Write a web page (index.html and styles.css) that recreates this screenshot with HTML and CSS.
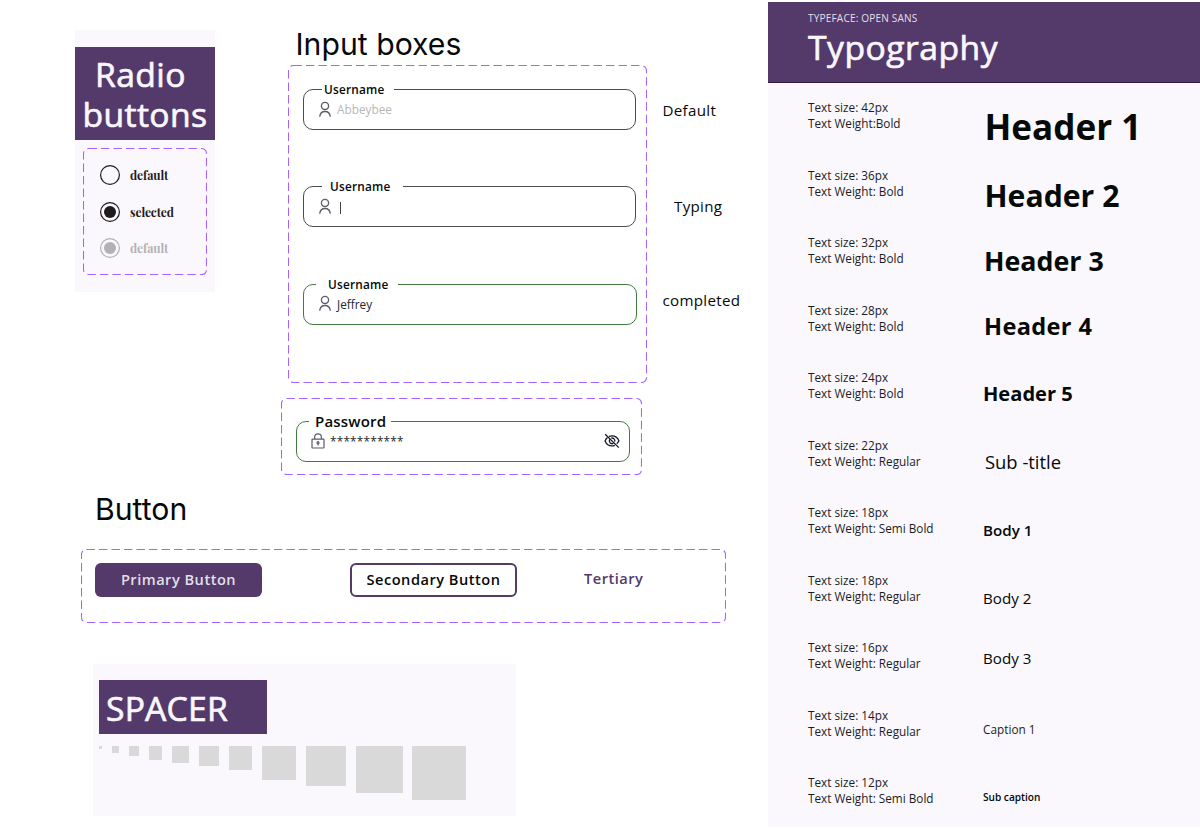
FILE: index.html
```html
<!DOCTYPE html>
<html lang="en">
<head>
  <meta charset="UTF-8">
  <title>Style guide</title>
  <meta name="viewport" content="width=device-width, initial-scale=1">
  <link rel="stylesheet" href="styles.css">
</head>
<body>

<!-- Shared icons -->
<svg class="sprite" width="0" height="0">
  <symbol id="icon-user" viewBox="0 0 12 17">
    <circle cx="6" cy="4.9" r="3.6"/>
    <path d="M.7 15.8C1 12.600 3.100 10.500 6 10.500s5 2.100 5.300 5.300"/>
  </symbol>
</svg>

<div class="board">
  <main class="components">
    <div class="top">
      <section class="radio-card">
        <h2 class="banner radio-title">Radio&nbsp;<br>buttons</h2>
        <div class="frame radio-frame">
          <svg class="dashes"><rect x="0.5" y="0.5" rx="5"/></svg>
          <div class="radio">
            <svg width="20" height="20"><circle class="ring" cx="10" cy="10" r="9.400"/></svg>
            <span>default</span>
          </div>
          <div class="radio">
            <svg width="20" height="20"><circle class="ring" cx="10" cy="10" r="9.400"/><circle class="dot" cx="10" cy="10" r="6"/></svg>
            <span>selected</span>
          </div>
          <div class="radio disabled">
            <svg width="20" height="20"><circle class="ring" cx="10" cy="10" r="9.400"/><circle class="dot" cx="10" cy="10" r="6"/></svg>
            <span>default</span>
          </div>
        </div>
      </section>

      <section class="inputs">
        <h2 class="heading">Input boxes</h2>
        <div class="inputs-row">
          <div class="frame inputs-frame">
            <svg class="dashes"><rect x="0.5" y="0.5" rx="5"/></svg>
            <fieldset class="field">
              <legend>Username</legend>
              <div class="value placeholder"><svg class="user"><use href="#icon-user"/></svg><span>Abbeybee</span></div>
            </fieldset>
            <fieldset class="field typing">
              <legend>Username</legend>
              <div class="value"><svg class="user"><use href="#icon-user"/></svg><i class="caret"></i></div>
            </fieldset>
            <fieldset class="field completed">
              <legend>Username</legend>
              <div class="value"><svg class="user"><use href="#icon-user"/></svg><span>Jeffrey</span></div>
            </fieldset>
          </div>
          <div class="states">
            <span>Default</span>
            <span class="state-typing">Typing</span>
            <span>completed</span>
          </div>
        </div>

        <div class="frame password-frame">
          <svg class="dashes"><rect x="0.5" y="0.5" rx="5"/></svg>
          <fieldset class="field password">
            <legend>Password</legend>
            <div class="value">
              <svg class="lock" viewBox="0 0 14 16">
                <rect x="1" y="6.200" width="12" height="8.800" rx=".5"/>
                <path d="M3.600 6V4.300a3.400 3.400 0 0 1 6.800 0V6M7 10v2.500"/>
                <circle cx="7" cy="9.700" r="1"/>
              </svg>
              <span class="stars">***********</span>
              <svg class="eye" viewBox="0 0 16 16">
                <path d="M5 3.300A7.500 6 0 0 1 8 2.800c3.200 0 5.700 2 6.900 5-.5 1.200-1.200 2.200-2.100 3M10.800 12.300a7.500 6 0 0 1-2.800.6c-3.200 0-5.700-2-6.900-5 .5-1.300 1.300-2.400 2.400-3.300"/>
                <path d="M7.300 5.100a2.800 2.800 0 0 1 3.400 3.500M5.600 6.600a2.800 2.800 0 0 0 3.700 3.800M1.200 1.200l13.600 13.400"/>
              </svg>
            </div>
          </fieldset>
        </div>
      </section>
    </div>

    <section class="buttons">
      <h2 class="heading">Button</h2>
      <div class="frame buttons-frame">
        <svg class="dashes"><rect x="0.5" y="0.5" rx="5"/></svg>
        <button class="btn primary">Primary Button</button>
        <button class="btn secondary">Secondary Button</button>
        <button class="btn tertiary">Tertiary</button>
      </div>
    </section>

    <section class="spacer-card">
      <h2 class="banner spacer-title">SPACER</h2>
      <div class="squares">
        <i style="width:3.4px"></i>
        <i style="width:6.7px"></i>
        <i style="width:10.1px"></i>
        <i style="width:13.5px"></i>
        <i style="width:16.8px"></i>
        <i style="width:20.2px"></i>
        <i style="width:23.6px"></i>
        <i style="width:33.6px"></i>
        <i style="width:40.2px"></i>
        <i style="width:47px"></i>
        <i style="width:53.7px"></i>
      </div>
    </section>
  </main>

  <aside class="typography">
    <header class="type-header">
      <p>TYPEFACE: OPEN SANS</p>
      <h1>Typography</h1>
    </header>
    <div class="type-list">
      <div class="type-row"><p>Text size: 42px<br>Text Weight:Bold</p><span class="h1">Header 1</span></div>
      <div class="type-row"><p>Text size: 36px<br>Text Weight: Bold</p><span class="h2">Header 2</span></div>
      <div class="type-row"><p>Text size: 32px<br>Text Weight: Bold</p><span class="h3">Header 3</span></div>
      <div class="type-row"><p>Text size: 28px<br>Text Weight: Bold</p><span class="h4">Header 4</span></div>
      <div class="type-row"><p>Text size: 24px<br>Text Weight: Bold</p><span class="h5">Header 5</span></div>
      <div class="type-row"><p>Text size: 22px<br>Text Weight: Regular</p><span class="subtitle">Sub -title</span></div>
      <div class="type-row"><p>Text size: 18px<br>Text Weight: Semi Bold</p><span class="body1">Body 1</span></div>
      <div class="type-row"><p>Text size: 18px<br>Text Weight: Regular</p><span class="body2">Body 2</span></div>
      <div class="type-row"><p>Text size: 16px<br>Text Weight: Regular</p><span class="body3">Body 3</span></div>
      <div class="type-row"><p>Text size: 14px<br>Text Weight: Regular</p><span class="caption">Caption 1</span></div>
      <div class="type-row"><p>Text size: 12px<br>Text Weight: Semi Bold</p><span class="subcaption">Sub caption</span></div>
    </div>
  </aside>
</div>

</body>
</html>
```

FILE: styles.css
```css
* {
  box-sizing: border-box;
}
body {
  margin: 0;
  background: #fff;
  color: #050908;
  font-family: 'Open Sans', sans-serif;
}
h1, h2, p {
  margin: 0;
}
.sprite {
  display: none;
}
.board {
  display: grid;
  grid-template-columns: 768px 432px;
  height: 828px;
  overflow: hidden;
}
.top {
  display: flex;
  align-items: flex-start;
  height: 475px;
}
.heading {
  font: 400 30.2px/40px Inter, sans-serif;
  height: 40px;
}
.banner, .type-header h1 {
  color: #f9f7fc;
  font-size: 33.67px;
  font-weight: 400;
  letter-spacing: 0.4px;
  -webkit-text-stroke: 0.7px #f9f7fc;
}
.banner {
  background: #533a6b;
  line-height: 40px;
}

/* Dashed frames */
.frame {
  position: relative;
}
.dashes {
  position: absolute;
  inset: 0;
  width: 100%;
  height: 100%;
  pointer-events: none;
}
.dashes rect {
  width: calc(100% - 1px);
  height: calc(100% - 1px);
  fill: none;
  stroke: #a563ff;
  stroke-width: 1.1;
  stroke-dasharray: 8.4 4.1;
}

/* Radio buttons */
.radio-card {
  width: 140px;
  height: 262px;
  margin: 30px 0 0 75px;
  padding-top: 17px;
  background: #faf8fc;
}
.radio-title {
  height: 93px;
  padding: 7px 0 0;
  text-align: center;
}
.radio-frame {
  width: 124px;
  height: 127px;
  margin: 8px 0 0 8px;
  padding: 17px 0 0 17px;
}
.radio {
  display: flex;
  align-items: center;
  gap: 10px;
  height: 20px;
  margin-bottom: 16.7px;
  color: #1f1b1c;
  font: 700 12px/20px 'Playfair Display', 'Liberation Serif', serif;
  letter-spacing: -0.1px;
}
.radio .ring {
  fill: none;
  stroke: currentColor;
  stroke-width: 1.2;
}
.radio .dot {
  fill: currentColor;
}
.radio.disabled {
  color: #b3b1b3;
}

/* Inputs */
.inputs {
  margin: 24px 0 0 66px;
}
.inputs .heading {
  padding-left: 14.5px;
}
.inputs-row {
  display: flex;
  margin: 1px 0 0 7px;
}
.inputs-frame {
  display: flex;
  flex-direction: column;
  gap: 49.4px;
  width: 359px;
  height: 318px;
  padding: 17px 0 0 15px;
}
.field {
  width: 332.5px;
  height: 48px;
  margin: 0;
  padding: 0;
  border: 1px solid #4c4c4e;
  border-radius: 10px;
}
.field legend {
  width: 72px;
  margin-left: 18px;
  padding: 0 0 0 2px;
  font-size: 11.8px;
  font-weight: 600;
  line-height: 15px;
  letter-spacing: 0.2px;
}
.field.typing legend {
  width: 81px;
  padding-left: 8px;
}
.field.completed {
  width: 334px;
  border-color: #437a40;
}
.field.completed legend {
  width: 82px;
  margin-left: 12px;
  padding-left: 12px;
}
.value {
  display: flex;
  align-items: center;
  height: 24px;
  padding-left: 15px;
  color: #23272a;
  font-size: 11.8px;
}
.placeholder {
  color: #b7b7b7;
}
.user {
  width: 12px;
  height: 17px;
  margin-right: 6px;
  fill: none;
  stroke: #5a5d6b;
  stroke-width: 1.3;
}
.caret {
  width: 1px;
  height: 12px;
  margin: 3px 0 0 3px;
  background: #444;
}
.states {
  display: flex;
  flex-direction: column;
  gap: 74px;
  padding: 35px 0 0 15.5px;
  font-size: 15.15px;
  line-height: 20px;
  letter-spacing: 0.3px;
}
.state-typing {
  margin: 1.5px 0 0 11.5px;
}
.password-frame {
  width: 361px;
  height: 77px;
  margin-top: 15px;
  padding: 14.4px 0 0 15px;
}
.field.password {
  width: 334px;
  height: 49.5px;
  border-color: #437a40;
}
.field.password legend {
  width: 82px;
  margin-left: 12px;
  padding-left: 6px;
  font-size: 15px;
  line-height: 19px;
}
.password .value {
  height: 20px;
  padding-left: 14px;
}
.lock {
  width: 14px;
  height: 16px;
  fill: none;
  stroke: #5a5d6b;
  stroke-width: 1.2;
}
.stars {
  margin-left: 5px;
  letter-spacing: 0.2px;
}
.eye {
  width: 16px;
  height: 16px;
  margin: 0 9.5px 0 auto;
  fill: none;
  stroke: #111827;
  stroke-width: 1.3;
}

/* Buttons */
.buttons {
  margin: 14px 0 0 81px;
}
.buttons .heading {
  padding-left: 14px;
}
.buttons-frame {
  display: flex;
  align-items: flex-start;
  width: 645px;
  height: 74px;
  margin-top: 20px;
  padding: 14px 0 0 14px;
}
.btn {
  height: 34px;
  padding: 0;
  border: 0;
  border-radius: 6px;
  background: none;
  font: 600 14.6px/34px 'Open Sans', sans-serif;
  letter-spacing: 0.5px;
}
.btn.primary {
  width: 167px;
  padding-bottom: 1px;
  background: #533a6b;
  color: #e3dfe6;
  line-height: 33px;
}
.btn.secondary {
  width: 167px;
  margin-left: 88px;
  padding-bottom: 1px;
  border: 2px solid #533a6b;
  color: #050908;
  line-height: 29px;
}
.btn.tertiary {
  height: 31px;
  margin-left: 67px;
  color: #533a6b;
  line-height: 31px;
}

/* Spacer */
.spacer-card {
  width: 423px;
  height: 152px;
  margin: 41px 0 0 93px;
  padding: 16px 0 0 6px;
  background: #faf8fc;
}
.spacer-title {
  width: 168px;
  height: 54px;
  padding: 8px 0 0 7px;
  letter-spacing: 0.2px;
}
.squares {
  display: flex;
  align-items: flex-start;
  gap: 9.85px;
  margin-top: 12px;
}
.squares i {
  aspect-ratio: 1;
  background: #d9d9d9;
}

/* Typography panel */
.typography {
  height: 825px;
  margin-top: 2px;
  background: #faf8fc;
}
.type-header {
  height: 81px;
  padding: 8px 0 0 40px;
  border-bottom: 1px solid #2e1b43;
  background: #533a6b;
}
.type-header p {
  color: #e3dfe9;
  font-size: 10.1px;
  line-height: 16px;
  letter-spacing: 0.15px;
}
.type-header h1 {
  letter-spacing: 0.5px;
  line-height: 42px;
}
.type-list {
  padding: 16px 0 0 40px;
}
.type-row {
  display: grid;
  grid-template-columns: 175px 1fr;
  align-items: start;
  height: 67.5px;
  line-height: 24px;
}
.type-row p {
  color: #1c1c1e;
  font-size: 11.75px;
  line-height: 16px;
}
.h1, .h2, .h3, .h4, .h5 {
  font-weight: 700;
}
.h1 {
  margin: 14.8px 0 0 1.5px;
  font-size: 35.1px;
}
.h2 {
  margin: 17.2px 0 0 1.5px;
  font-size: 30.2px;
}
.h3 {
  margin: 14.5px 0 0 1px;
  font-size: 26.8px;
}
.h4 {
  margin: 12.8px 0 0 1px;
  font-size: 23.6px;
  letter-spacing: 0.35px;
}
.h5 {
  margin-top: 13px;
  font-size: 20.1px;
}
.subtitle {
  margin: 13.3px 0 0 2px;
  font-size: 18.4px;
}
.body1, .body2 {
  margin-top: 14.1px;
  font-size: 15.15px;
}
.body1 {
  font-weight: 600;
}
.body3 {
  margin-top: 6.6px;
  font-size: 15.15px;
}
.caption {
  margin-top: 10.4px;
  color: #1c1c1e;
  font-size: 11.8px;
}
.subcaption {
  margin-top: 10.6px;
  font-size: 10.1px;
  font-weight: 600;
}
```
